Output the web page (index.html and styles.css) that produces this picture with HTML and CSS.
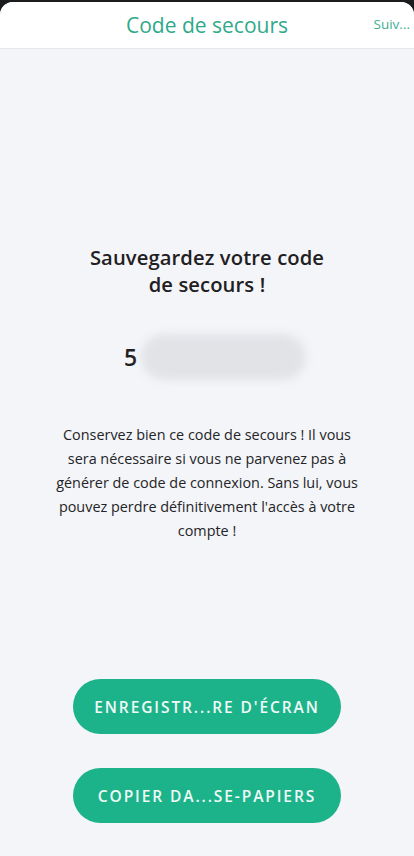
FILE: index.html
```html
<!DOCTYPE html>
<html>
  <head>
  <meta charset='utf-8'>
  <link rel="stylesheet" href="styles.css">
  </head>
  <body>
  <div class="sheet">
    <div class="header">
      <div class="title">Code de secours</div>
      <div class="next">Suiv...</div>
    </div>
    <div class="content">
      <h2>Sauvegardez votre code<br>de secours !</h2>
      <div class="code">
        <span class="digit">5</span>
        <span class="blur"></span>
      </div>
      <p class="info">Conservez bien ce code de secours ! Il vous sera nécessaire si vous ne parvenez pas à générer de code de connexion. Sans lui, vous pouvez perdre définitivement l'accès à votre compte !</p>
      <div class="buttons">
        <button class="btn">ENREGISTR...RE D'ÉCRAN</button>
        <button class="btn">COPIER DA...SE-PAPIERS</button>
      </div>
    </div>
  </div>
  </body>
</html>
```
FILE: styles.css
```css
html, body {
  margin: 0;
  height: 100%;
  background: #1b1c1e;
}
body {
  font-family: "Open Sans", "Noto Sans", sans-serif;
  padding-top: 2px;
  box-sizing: border-box;
}
.sheet {
  height: 854px;
  background: #f4f5f9;
  border-radius: 13px 13px 0 0;
  overflow: hidden;
  display: flex;
  flex-direction: column;
}
.header {
  height: 46px;
  background: #fff;
  border-bottom: 1px solid #e6e8ec;
  display: flex;
  align-items: center;
  justify-content: center;
  position: relative;
}
.title {
  color: #2fa98a;
  font-size: 21px;
}
.next {
  position: absolute;
  right: 4px;
  top: 13px;
  color: #3fae92;
  font-size: 13.5px;
}
.content {
  display: flex;
  flex-direction: column;
  align-items: center;
}
h2 {
  margin: 195px 0 0;
  font-size: 20.2px;
  line-height: 27px;
  font-weight: 600;
  letter-spacing: 0.1px;
  text-align: center;
  color: #1f2022;
}
.code {
  margin-top: 36px;
  display: flex;
  align-items: center;
  width: 182px;
  margin-left: 16px;
}
.digit {
  font-size: 23px;
  font-weight: 600;
  color: #1f2022;
  width: 17px;
}
.blur {
  width: 165px;
  height: 46px;
  border-radius: 23px;
  background: #e2e3e7;
  filter: blur(4px);
}
.info {
  margin: 43px 0 0;
  width: 306px;
  font-size: 14.4px;
  line-height: 24px;
  text-align: center;
  color: #232427;
}
.buttons {
  margin-top: 136px;
  display: flex;
  flex-direction: column;
  gap: 34px;
}
.btn {
  width: 268px;
  height: 55px;
  border: none;
  border-radius: 28px;
  background: #1db38a;
  color: #f0fbf7;
  font-family: "Open Sans", "Noto Sans", sans-serif;
  font-size: 15.5px;
  font-weight: 600;
  letter-spacing: 1.9px;
}
```
